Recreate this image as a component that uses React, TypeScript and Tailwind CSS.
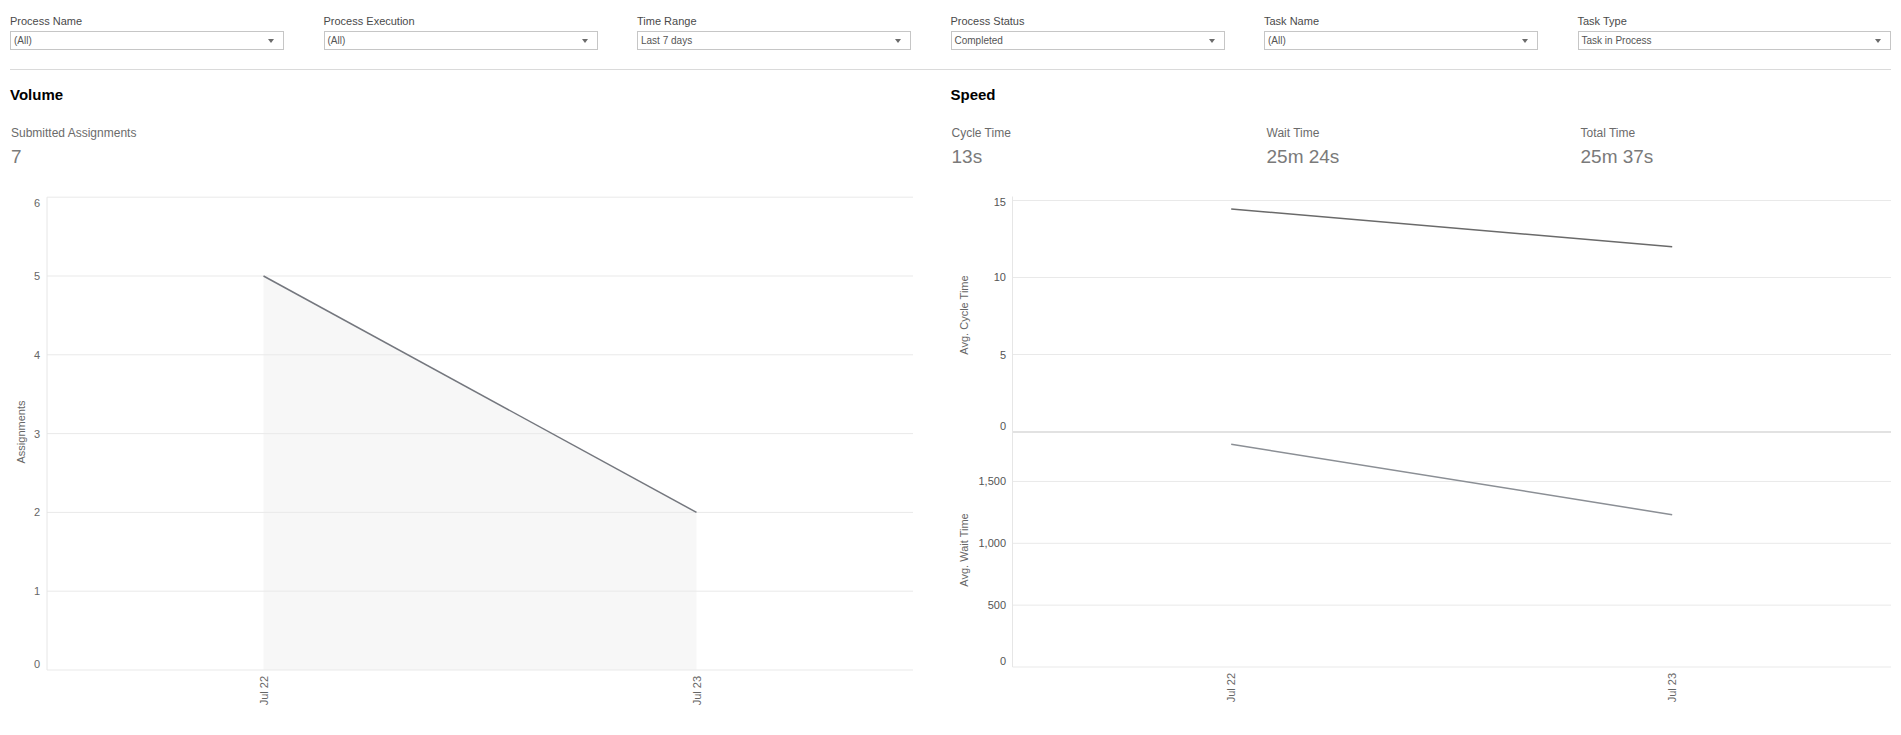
import React from "react";

const FONT: React.CSSProperties = { fontFamily: '"Liberation Sans", Arial, Helvetica, sans-serif' };

function Dropdown({ label, value, wide }: { label: string; value: string; wide?: boolean }) {
  return (
    <div className="flex flex-col">
      <div className="text-[11px] leading-[14px] text-[#4a4a4a]">{label}</div>
      <div
        className={
          wide
            ? "mt-[3px] h-[19px] w-full border border-[#c6c6c6] bg-white flex items-center justify-between pl-[3px] pr-[9px]"
            : "mt-[3px] h-[19px] w-[274px] border border-[#c6c6c6] bg-white flex items-center justify-between pl-[3px] pr-[9px]"
        }
      >
        <span className="text-[10px] leading-none text-[#555555]">{value}</span>
        <svg width="6" height="4" viewBox="0 0 6 4">
          <path d="M0 0 L6 0 L3 4 Z" fill="#6b6b6b" />
        </svg>
      </div>
    </div>
  );
}

function Metric({ label, value, className }: { label: string; value: string; className?: string }) {
  return (
    <div className={className}>
      <div className="text-[12px] leading-[14px] text-[#6b6b6b]">{label}</div>
      <div className="mt-[6px] text-[19px] leading-[22px] text-[#7a7a7a]">{value}</div>
    </div>
  );
}

function VolumeChart() {
  const left = 37;
  const right = 903;
  const y0 = 490;
  const step = 78.8;
  const ticks = [0, 1, 2, 3, 4, 5, 6];
  const yOf = (v: number) => y0 - step * v;
  const x1 = 253.5;
  const x2 = 686.5;
  return (
    <svg width="940" height="555" viewBox="0 0 940 555" style={FONT} className="block">
      <polygon
        points={`${x1},${yOf(5)} ${x2},${yOf(2)} ${x2},${y0} ${x1},${y0}`}
        fill="#f7f7f7"
      />
      {ticks.map((v) => (
        <line key={v} x1={left} x2={right} y1={yOf(v)} y2={yOf(v)} stroke="#e9e9e9" strokeWidth="1" />
      ))}
      <line x1={left} x2={left} y1={yOf(6)} y2={y0} stroke="#e6e6e6" strokeWidth="1" />
      {ticks.map((v) => {
        let cy = yOf(v);
        if (v === 6) cy = yOf(6) + 5.5;
        if (v === 0) cy = y0 - 6.5;
        return (
          <text key={v} x={30} y={cy + 4} textAnchor="end" fontSize="11" fill="#666666">
            {v}
          </text>
        );
      })}
      <text
        transform={`translate(11 252) rotate(-90)`}
        dy="4"
        textAnchor="middle"
        fontSize="11"
        fill="#666666"
      >
        Assignments
      </text>
      <line x1={x1} y1={yOf(5)} x2={x2} y2={yOf(2)} stroke="#74777e" strokeWidth="1.5" />
      {[
        { x: x1, t: "Jul 22" },
        { x: x2, t: "Jul 23" },
      ].map((d) => (
        <text
          key={d.t}
          transform={`translate(${d.x} 496) rotate(-90)`}
          dy="4"
          textAnchor="end"
          fontSize="11"
          fill="#666666"
        >
          {d.t}
        </text>
      ))}
    </svg>
  );
}

function SpeedChart() {
  const left = 61.5;
  const right = 940;
  const upper0 = 251.5;
  const upperStep = 15.4;
  const lower0 = 487;
  const lowerStep = 0.1237;
  const uY = (v: number) => upper0 - upperStep * v;
  const lY = (v: number) => lower0 - lowerStep * v;
  const xa = 280.2;
  const xb = 721.2;
  const upperTicks = [0, 5, 10, 15];
  const lowerTicks = [0, 500, 1000, 1500];
  const fmt = (v: number) => v.toLocaleString("en-US");
  return (
    <svg width="941" height="555" viewBox="0 0 941 555" style={FONT} className="block">
      {upperTicks
        .filter((v) => v !== 0)
        .map((v) => (
          <line key={`u${v}`} x1={left} x2={right} y1={uY(v)} y2={uY(v)} stroke="#e9e9e9" strokeWidth="1" />
        ))}
      {lowerTicks.map((v) => (
        <line key={`l${v}`} x1={left} x2={right} y1={lY(v)} y2={lY(v)} stroke="#e9e9e9" strokeWidth="1" />
      ))}
      <line x1={left} x2={right} y1={upper0 + 0.5} y2={upper0 + 0.5} stroke="#e2e2e2" strokeWidth="2" />
      <line x1={left} x2={left} y1={16.5} y2={lower0} stroke="#e6e6e6" strokeWidth="1" />
      {upperTicks.map((v) => {
        let cy = uY(v);
        if (v === 15) cy = uY(15) + 1;
        if (v === 0) cy = upper0 - 6;
        if (v === 10) cy = uY(10) - 1;
        return (
          <text key={`ut${v}`} x={55} y={cy + 4} textAnchor="end" fontSize="11" fill="#555555">
            {v}
          </text>
        );
      })}
      {lowerTicks.map((v) => {
        let cy = lY(v);
        if (v === 0) cy = lower0 - 6.5;
        return (
          <text key={`lt${v}`} x={55} y={cy + 4} textAnchor="end" fontSize="11" fill="#555555">
            {fmt(v)}
          </text>
        );
      })}
      <text
        transform={`translate(12.5 135) rotate(-90)`}
        dy="4"
        textAnchor="middle"
        fontSize="11"
        fill="#666666"
      >
        Avg. Cycle Time
      </text>
      <text
        transform={`translate(12.5 370) rotate(-90)`}
        dy="4"
        textAnchor="middle"
        fontSize="11"
        fill="#666666"
      >
        Avg. Wait Time
      </text>
      <line x1={xa} y1={29} x2={xb} y2={66.7} stroke="#6a6a6a" strokeWidth="1.5" />
      <line x1={xa} y1={264.3} x2={xb} y2={334.7} stroke="#8b8f95" strokeWidth="1.5" />
      {[
        { x: xa, t: "Jul 22" },
        { x: xb, t: "Jul 23" },
      ].map((d) => (
        <text
          key={d.t}
          transform={`translate(${d.x} 493) rotate(-90)`}
          dy="4"
          textAnchor="end"
          fontSize="11"
          fill="#666666"
        >
          {d.t}
        </text>
      ))}
    </svg>
  );
}

export default function App() {
  return (
    <div className="w-[1901px] h-[735px] bg-white overflow-hidden" style={FONT}>
      <div className="px-[10px] pt-[14px]">
        <div className="grid grid-cols-6">
          <Dropdown label="Process Name" value="(All)" />
          <Dropdown label="Process Execution" value="(All)" />
          <Dropdown label="Time Range" value="Last 7 days" />
          <Dropdown label="Process Status" value="Completed" />
          <Dropdown label="Task Name" value="(All)" />
          <Dropdown label="Task Type" value="Task in Process" wide />
        </div>
        <div className="mt-[19px] h-px bg-[#dadada]" />
        <div className="grid grid-cols-2">
          <div className="flex flex-col">
            <div className="mt-[16px] text-[15px] leading-[18px] font-bold text-black">Volume</div>
            <div className="mt-[22px] pl-[1px]">
              <Metric label="Submitted Assignments" value="7" />
            </div>
            <div className="mt-[12px]">
              <VolumeChart />
            </div>
          </div>
          <div className="flex flex-col">
            <div className="mt-[16px] text-[15px] leading-[18px] font-bold text-black">Speed</div>
            <div className="mt-[22px] flex pl-[1px]">
              <Metric className="w-[315px]" label="Cycle Time" value="13s" />
              <Metric className="w-[314px]" label="Wait Time" value="25m 24s" />
              <Metric className="w-[300px]" label="Total Time" value="25m 37s" />
            </div>
            <div className="mt-[12px]">
              <SpeedChart />
            </div>
          </div>
        </div>
      </div>
    </div>
  );
}
